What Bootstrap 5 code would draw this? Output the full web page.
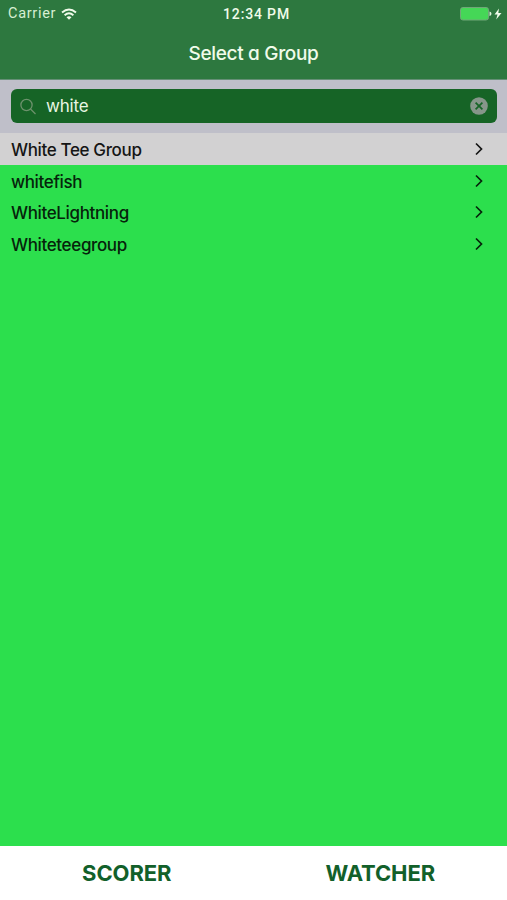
<!DOCTYPE html>
<html lang="en">
<head>
<meta charset="utf-8">
<meta name="viewport" content="width=device-width, initial-scale=1">
<title>Select a Group</title>
<link href="https://cdn.jsdelivr.net/npm/bootstrap@5.3.0/dist/css/bootstrap.min.css" rel="stylesheet">
<style>
body { font-family: Inter, "Liberation Sans", sans-serif; font-feature-settings: "cv11"; background: #2cdf4d; color: #0b160d; }
.top-bar { background: #2d783f; color: #f0fbea; height: 80px; border-bottom: 1px solid #658f76; }
.status-row { height: 28px; font-size: 14px; padding: 0 5px 0 8px; }
.status-row > * { flex: 1 1 0; }
.carrier { color: #d7efd3; letter-spacing: .7px; font-size: 14.5px; font-family: Roboto, sans-serif; }
.clock { font-family: Roboto, sans-serif; font-weight: 500; letter-spacing: .85px; padding-left: 3px; }
.page-title { font-size: 19px; line-height: 24px; font-weight: 500; margin: 14px 0 0; letter-spacing: -.33px; }
.search-area { background: #bfbfc9; height: 53px; padding: 9px 10px 0 11px; }
.search-box { background: #166426; height: 34px; border-radius: 6px; padding: 0 9px; }
.search-box input { background: none; border: 0; outline: 0; color: #e8f6e3; font-size: 17px; letter-spacing: -.2px; padding: 0; margin-left: 10px; height: 34px; min-width: 0; font-feature-settings: inherit; }
.group-row { height: 31.7px; padding: 0 23px 0 11px; font-size: 17px; line-height: 30px; letter-spacing: -.36px; font-weight: 500; color: #06230b; background: none; border: 0; border-radius: 0; }
.group-row span { padding-top: 2px; }
.group-row.picked { background: #d2d1d2; color: #151515; }
.role-bar { background: #fff; height: 54px; }
.role-bar a { color: #12602a; font-size: 22px; font-weight: 700; letter-spacing: -.1px; padding-top: 1px; text-decoration: none; }
</style>
<script src="https://cdn.jsdelivr.net/npm/bootstrap@5.3.0/dist/js/bootstrap.bundle.min.js"></script>
</head>
<body class="d-flex flex-column vh-100 overflow-hidden m-0">
<header class="top-bar flex-shrink-0">
  <div class="status-row d-flex align-items-center">
    <div class="carrier d-flex align-items-center">Carrier
      <svg class="ms-1" width="17" height="13" viewBox="0 0 17 13" fill="none" stroke="#f0fbea" stroke-width="1.900"><path d="M2 4.400Q9-1.500 16 4.400M4.600 7.200Q9 3.400 13.400 7.200"/><path d="M9 11.800 6.500 9.300Q9 7.300 11.500 9.300Z" fill="#f0fbea" stroke="none"/></svg>
    </div>
    <div class="clock text-center">12:34 PM</div>
    <div class="d-flex justify-content-end">
      <svg width="42" height="14" viewBox="0 0 42 14"><rect x=".5" y=".5" width="28" height="12.500" rx="2.400" fill="#45d757" stroke="#70a778"/><path d="M29.500 4.500Q31.500 5 31.500 6.700T29.500 9Z" fill="#dff5dc"/><path d="M39 1.500 34.500 7.500h3L36.200 12.500 41.500 6h-3.200Z" fill="#f0fbea"/></svg>
    </div>
  </div>
  <h1 class="page-title text-center">Select a Group</h1>
</header>
<div class="search-area flex-shrink-0">
  <div class="search-box d-flex align-items-center">
    <svg width="16" height="17" viewBox="0 0 16 17" fill="none" stroke="#6d926c" stroke-width="1.300"><circle cx="6.500" cy="7" r="5.600"/><path d="m10.500 11 5 5"/></svg>
    <input class="flex-grow-1" type="text" value="white" aria-label="Search groups">
    <svg width="18" height="18" viewBox="0 0 18 18"><circle cx="9" cy="9" r="8.800" fill="#86968a"/><path d="m5.600 5.600 6.800 6.800m0-6.800-6.800 6.800" stroke="#166426" stroke-width="1.700"/></svg>
  </div>
</div>
<main class="list-group list-group-flush flex-grow-1">
  <a href="#" class="group-row picked list-group-item d-flex justify-content-between align-items-center"><span>White Tee Group</span><svg width="10" height="14" viewBox="0 0 10 14" fill="none" stroke="currentColor" stroke-width="1.700"><path d="m2 1.500 5.500 5.500L2 12.500"/></svg></a>
  <a href="#" class="group-row list-group-item d-flex justify-content-between align-items-center"><span>whitefish</span><svg width="10" height="14" viewBox="0 0 10 14" fill="none" stroke="currentColor" stroke-width="1.700"><path d="m2 1.500 5.500 5.500L2 12.500"/></svg></a>
  <a href="#" class="group-row list-group-item d-flex justify-content-between align-items-center"><span>WhiteLightning</span><svg width="10" height="14" viewBox="0 0 10 14" fill="none" stroke="currentColor" stroke-width="1.700"><path d="m2 1.500 5.500 5.500L2 12.500"/></svg></a>
  <a href="#" class="group-row list-group-item d-flex justify-content-between align-items-center"><span>Whiteteegroup</span><svg width="10" height="14" viewBox="0 0 10 14" fill="none" stroke="currentColor" stroke-width="1.700"><path d="m2 1.500 5.500 5.500L2 12.500"/></svg></a>
</main>
<footer class="role-bar row g-0 flex-shrink-0 align-items-center text-center">
  <a class="col-6" href="#">SCORER</a>
  <a class="col-6" href="#">WATCHER</a>
</footer>
</body>
</html>
